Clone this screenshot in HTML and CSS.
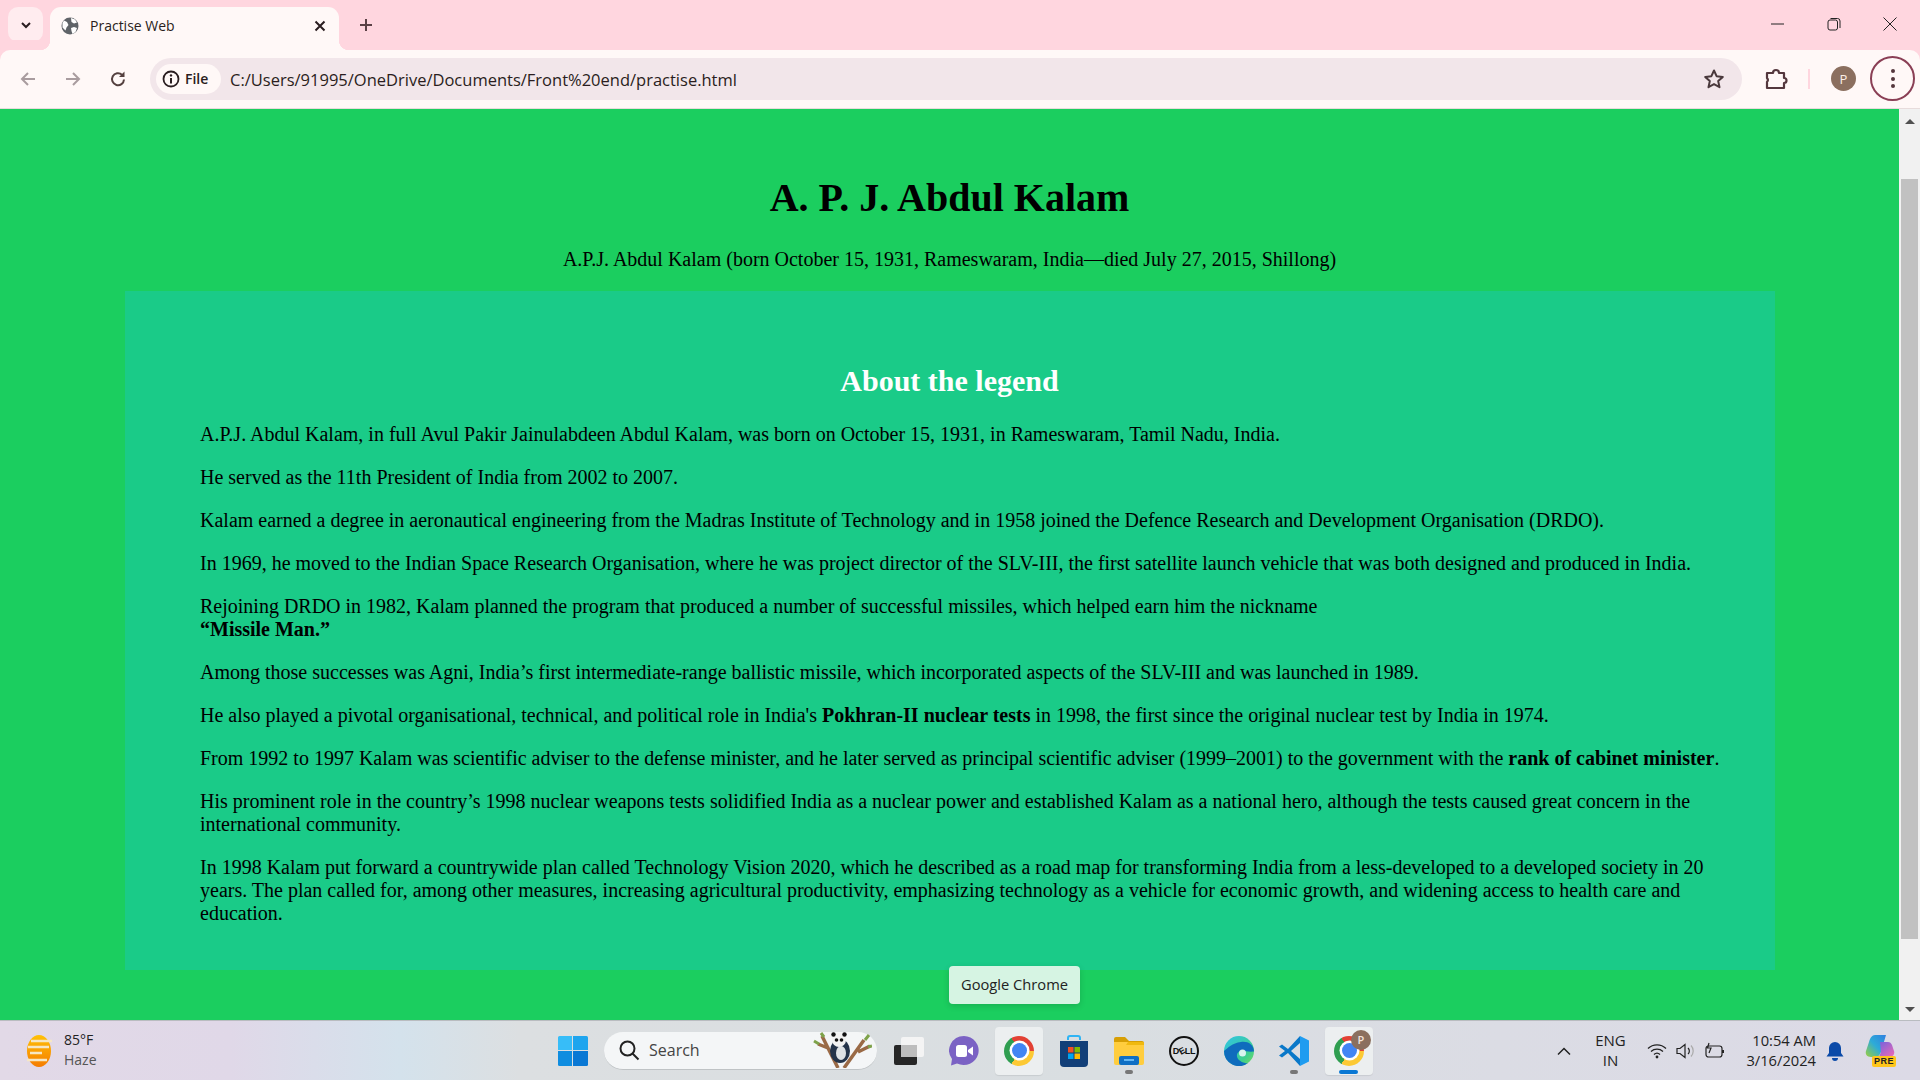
FILE: index.html
```html
<!DOCTYPE html>
<html lang="en">
<head>
<meta charset="utf-8">
<title>Practise Web</title>
<link rel="stylesheet" href="styles.css">
</head>
<body>
<div class="screen">
  <header class="tabbar">
    <button class="tabsearch"><svg width="14" height="14" viewBox="0 0 14 14"><path d="M3 5l4 4 4-4" fill="none" stroke="#2a1d20" stroke-width="2"/></svg></button>
    <div class="tab">
      <svg class="favicon" width="18" height="18" viewBox="0 0 18 18"><circle cx="9" cy="9" r="8.500" fill="#5f6368"/><path d="M3 3.500l3 1.500 1.500 3-2 2.500-1 3-3-3V6zM10 1l4 1.500 2 3-3 1-2.500-1.500zM10 11l3-1 3 1-1.500 4-3 2-1-3z" fill="#fff"/></svg>
      <span class="tabtitle">Practise Web</span>
      <svg class="tabclose" width="12" height="12" viewBox="0 0 12 12"><path d="M1.500 1.500l9 9M10.500 1.500l-9 9" stroke="#2a1d20" stroke-width="2"/></svg>
    </div>
    <svg class="newtab" width="14" height="14" viewBox="0 0 14 14"><path d="M7 1v12M1 7h12" stroke="#5b4146" stroke-width="2"/></svg>
    <div class="wincontrols">
      <svg width="14" height="14" viewBox="0 0 14 14"><path d="M0 7h13" stroke="#222" stroke-width="1"/></svg>
      <svg width="14" height="14" viewBox="0 0 14 14"><rect x="1" y="3" width="9.500" height="10" rx="2" fill="none" stroke="#222"/><path d="M3.500 1.500h7a2.500 2.500 0 0 1 2.500 2.500v7" fill="none" stroke="#222"/></svg>
      <svg width="14" height="14" viewBox="0 0 14 14"><path d="M.5.5l13 13M13.500.5l-13 13" stroke="#222" stroke-width="1"/></svg>
    </div>
  </header>

  <nav class="toolbar">
    <svg class="navicon" width="18" height="18" viewBox="0 0 18 18"><path d="M16 9H3M9 3L3 9l6 6" fill="none" stroke="#a99c9f" stroke-width="2"/></svg>
    <svg class="navicon" width="18" height="18" viewBox="0 0 18 18"><path d="M2 9h13M9 3l6 6-6 6" fill="none" stroke="#a99c9f" stroke-width="2"/></svg>
    <svg class="navicon" width="18" height="18" viewBox="0 0 18 18"><path d="M15 9.500A6 6 0 1 1 13 4.700" fill="none" stroke="#54403f" stroke-width="2"/><path d="M15.500 1.500v5.500H10z" fill="#54403f"/></svg>
    <div class="omnibox">
      <div class="chip">
        <svg width="18" height="18" viewBox="0 0 18 18"><circle cx="9" cy="9" r="7.500" fill="none" stroke="#2a1d20" stroke-width="1.800"/><path d="M9 8v5.500" stroke="#2a1d20" stroke-width="2"/><circle cx="9" cy="5.400" r="1.200" fill="#2a1d20"/></svg>
        <span>File</span>
      </div>
      <span class="url">C:/Users/91995/OneDrive/Documents/Front%20end/practise.html</span>
      <svg class="star" width="22" height="22" viewBox="0 0 22 22"><path d="M11 2.500l2.600 5.700 6.200.7-4.600 4.200 1.300 6.100-5.500-3.100-5.500 3.100 1.300-6.100L2.200 8.900l6.200-.7z" fill="none" stroke="#4a393c" stroke-width="2" stroke-linejoin="round"/></svg>
    </div>
    <div class="toolicons">
      <svg width="24" height="24" viewBox="0 0 24 24"><path d="M3 6h6a3 3 0 0 1 6 0h5v5a2.500 2.500 0 0 1 0 5v5H3v-6a3 3 0 0 0 0-4z" fill="none" stroke="#54373d" stroke-width="2.200" stroke-linejoin="round"/></svg>
      <span class="divider"></span>
      <span class="avatar">P</span>
      <span class="menubtn"><i></i><i></i><i></i></span>
    </div>
  </nav>

  <div class="viewport">
    <main class="page">
      <h1>A. P. J. Abdul Kalam</h1>
      <p class="lead">A.P.J. Abdul Kalam (born October 15, 1931, Rameswaram, India—died July 27, 2015, Shillong)</p>
      <section class="panel">
        <h2>About the legend</h2>
        <p>A.P.J. Abdul Kalam, in full Avul Pakir Jainulabdeen Abdul Kalam, was born on October 15, 1931, in Rameswaram, Tamil Nadu, India.</p>
        <p>He served as the 11th President of India from 2002 to 2007.</p>
        <p>Kalam earned a degree in aeronautical engineering from the Madras Institute of Technology and in 1958 joined the Defence Research and Development Organisation (DRDO).</p>
        <p>In 1969, he moved to the Indian Space Research Organisation, where he was project director of the SLV-III, the first satellite launch vehicle that was both designed and produced in India.</p>
        <p>Rejoining DRDO in 1982, Kalam planned the program that produced a number of successful missiles, which helped earn him the nickname<br><b>“Missile Man.”</b></p>
        <p>Among those successes was Agni, India’s first intermediate-range ballistic missile, which incorporated aspects of the SLV-III and was launched in 1989.</p>
        <p>He also played a pivotal organisational, technical, and political role in India's <b>Pokhran-II nuclear tests</b> in 1998, the first since the original nuclear test by India in 1974.</p>
        <p>From 1992 to 1997 Kalam was scientific adviser to the defense minister, and he later served as principal scientific adviser (1999–2001) to the government with the <b>rank of cabinet minister</b>.</p>
        <p>His prominent role in the country’s 1998 nuclear weapons tests solidified India as a nuclear power and established Kalam as a national hero, although the tests caused great concern in the international community.</p>
        <p>In 1998 Kalam put forward a countrywide plan called Technology Vision 2020, which he described as a road map for transforming India from a less-developed to a developed society in 20 years. The plan called for, among other measures, increasing agricultural productivity, emphasizing technology as a vehicle for economic growth, and widening access to health care and education.</p>
      </section>
    </main>
    <aside class="scrollbar">
      <span class="arrow up"></span>
      <span class="thumb"></span>
      <span class="arrow down"></span>
    </aside>
    <div class="tooltip">Google Chrome</div>
  </div>

  <footer class="taskbar">
    <div class="weather">
      <svg width="28" height="34" viewBox="0 0 28 34"><defs><linearGradient id="sun" x1="0" y1="0" x2="0" y2="1"><stop offset="0" stop-color="#ffc107"/><stop offset="1" stop-color="#f57c00"/></linearGradient></defs><ellipse cx="14" cy="17" rx="12" ry="16" fill="url(#sun)"/><path d="M6 7h21M3 13h16M12 13h12M5 19h12M2 26h20" stroke="#f6e7c4" stroke-width="2.500"/></svg>
      <div class="weathertext"><span>85°F</span><span class="haze">Haze</span></div>
    </div>
    <div class="centerbar">
      <svg class="winlogo" width="30" height="30" viewBox="0 0 30 30"><path d="M0 1.500A1.500 1.500 0 0 1 1.500 0H14v14H0z" fill="#37bdf8"/><path d="M15 0h13.500A1.500 1.500 0 0 1 30 1.500V14H15z" fill="#1ea5ee"/><path d="M0 15h14v15H1.500A1.500 1.500 0 0 1 0 28.500z" fill="#0f8de0"/><path d="M15 15h15v13.500a1.500 1.500 0 0 1-1.500 1.500H15z" fill="#0a78d4"/></svg>
      <div class="search">
        <svg width="22" height="22" viewBox="0 0 22 22"><circle cx="9.500" cy="9.500" r="7" fill="none" stroke="#222" stroke-width="2"/><path d="M14.500 14.500l6 6" stroke="#222" stroke-width="2"/></svg>
        <span class="searchlabel">Search</span>
        <svg class="panda" width="60" height="36" viewBox="0 0 60 36"><path d="M10 4l16 32M52 8L32 36M46 20l12-6M16 16L6 12" stroke="#9a6a46" stroke-width="3.500" fill="none"/><path d="M53 8l4-5M56 15l4-1M7 12L2 9M12 5L9 1" stroke="#7ea24a" stroke-width="3"/><ellipse cx="28" cy="19" rx="10" ry="12" fill="#24344a"/><ellipse cx="29" cy="21" rx="5" ry="7" fill="#dfe3e6"/><circle cx="27" cy="8" r="7" fill="#f2f2f2"/><circle cx="24.500" cy="8" r="1.800" fill="#111"/><circle cx="29.500" cy="8" r="1.800" fill="#111"/><circle cx="21.500" cy="2.500" r="2.200" fill="#111"/><circle cx="32.500" cy="2.500" r="2.200" fill="#111"/></svg>
      </div>
      <div class="apps">
        <span class="app"><svg width="32" height="30" viewBox="0 0 32 30"><rect x="8" y="1" width="23" height="20" rx="2" fill="#f4f4f4"/><rect x="1" y="9" width="23" height="20" rx="2" fill="#262626"/><rect x="8" y="9" width="16" height="12" fill="#bdbdbd"/></svg></span>
        <span class="app"><svg width="30" height="30" viewBox="0 0 30 30"><path d="M15 0a15 14.500 0 1 1-7 27.500L2 29.500l1-6.500A15 14.500 0 0 1 15 0z" fill="#7b62c4"/><rect x="7" y="9" width="11" height="12" rx="2.500" fill="#fff"/><path d="M19 14l5-3.500v9L19 16z" fill="#fff"/></svg></span>
        <span class="app hover"><span class="chrome"></span></span>
        <span class="app"><svg width="30" height="32" viewBox="0 0 30 32"><path d="M9 5V3a2 2 0 0 1 2-2h8a2 2 0 0 1 2 2v2" fill="none" stroke="#2fb4f4" stroke-width="2"/><path d="M1 6h28v22a4 4 0 0 1-4 4H5a4 4 0 0 1-4-4z" fill="#123f78"/><rect x="9" y="12" width="5.500" height="5.500" fill="#f25022"/><rect x="15.500" y="12" width="5.500" height="5.500" fill="#7fba00"/><rect x="9" y="18.500" width="5.500" height="5.500" fill="#00a4ef"/><rect x="15.500" y="18.500" width="5.500" height="5.500" fill="#ffb900"/></svg></span>
        <span class="app dot"><svg width="30" height="28" viewBox="0 0 30 28"><path d="M0 2a2 2 0 0 1 2-2h9l4 4h13a2 2 0 0 1 2 2v4H0z" fill="#d79f05"/><path d="M0 5h30v21a2 2 0 0 1-2 2H2a2 2 0 0 1-2-2z" fill="#ffcd3e"/><path d="M14 5h16v3H12z" fill="#f0b90f"/><rect x="5" y="19" width="20" height="9" rx="2" fill="#0f6fc4"/><rect x="10" y="22" width="10" height="2" fill="#63b6f3"/></svg></span>
        <span class="app"><span class="dell"><span>D<i>E</i>LL</span></span></span>
        <span class="app"><svg width="30" height="30" viewBox="0 0 30 30"><defs><linearGradient id="edge" x1="0" y1="0" x2="1" y2="1"><stop offset="0" stop-color="#2fc3e8"/><stop offset=".7" stop-color="#3ecf8e"/><stop offset="1" stop-color="#7dd957"/></linearGradient></defs><circle cx="15" cy="15" r="15" fill="url(#edge)"/><path d="M0 15a15 15 0 0 0 24 12 10 10 0 0 1-9-3c-4-4-2-9 3-9 3 0 7 1 12 .5C30 8 23 5 17 6 8 7 4 12 0 15z" fill="#0f6cbd"/><circle cx="18.500" cy="17" r="3.500" fill="#d8f3ee"/></svg></span>
        <span class="app dot"><svg width="30" height="30" viewBox="0 0 30 30"><path d="M21 0l9 4.500v21L21 30V0z" fill="#1f9cf0"/><path d="M21 0L9 13 3 8.500 0 10.500 6 15l-6 4.500 3 2L9 17l12 13v-7L12 15l9-8z" fill="#0a78c9"/></svg></span>
        <span class="app active"><span class="chrome"></span><span class="badge">P</span></span>
      </div>
    </div>
    <div class="tray">
      <svg width="16" height="10" viewBox="0 0 16 10"><path d="M2 8.500l6-6 6 6" fill="none" stroke="#222" stroke-width="1.500"/></svg>
      <div class="lang"><span>ENG</span><span>IN</span></div>
      <div class="sysicons">
        <svg width="20" height="16" viewBox="0 0 20 16"><path d="M1 5.500a13 13 0 0 1 18 0M4 8.500a9 9 0 0 1 12 0M7 11.500a4.500 4.500 0 0 1 6 0" fill="none" stroke="#222" stroke-width="1.300"/><circle cx="10" cy="14" r="1.400" fill="#222"/></svg>
        <svg width="20" height="18" viewBox="0 0 20 18"><path d="M1 6.500h3l5-4v13l-5-4H1z" fill="none" stroke="#222" stroke-width="1.200"/><path d="M12 6a4 4 0 0 1 0 6" fill="none" stroke="#222" stroke-width="1.200"/><path d="M15 3.500a8 8 0 0 1 0 11" fill="none" stroke="#aaa" stroke-width="1.200"/></svg>
        <svg width="20" height="18" viewBox="0 0 20 18"><rect x="1" y="4" width="16" height="11" rx="2.500" fill="none" stroke="#222" stroke-width="1.200"/><path d="M18 8v3" stroke="#222" stroke-width="2"/><path d="M4 1L2.500 6H6l-2 5" fill="none" stroke="#222" stroke-width="1.200"/></svg>
      </div>
      <div class="clock"><span>10:54 AM</span><span>3/16/2024</span></div>
      <svg class="bell" width="18" height="20" viewBox="0 0 18 20"><path d="M9 1a6 6 0 0 1 6 6v5l2.500 3.500H.5L3 12V7a6 6 0 0 1 6-6z" fill="#0b4aa8"/><path d="M6 17h6a3 3 0 0 1-6 0z" fill="#0b4aa8"/></svg>
      <div class="copilot">
        <svg width="30" height="24" viewBox="0 0 30 24"><defs><linearGradient id="copa" x1="0" y1="1" x2="1" y2="0"><stop offset="0" stop-color="#9ccf3c"/><stop offset=".5" stop-color="#2dabd8"/><stop offset="1" stop-color="#2f7fe0"/></linearGradient><linearGradient id="copb" x1="0" y1="0" x2="1" y2="1"><stop offset="0" stop-color="#6a63e0"/><stop offset="1" stop-color="#f06bb5"/></linearGradient></defs><path d="M10 0h11l-5 17c-1 3-3 5-6 5H6c-4 0-6-3-5-6l3-9c1-4 3-7 6-7z" fill="url(#copa)"/><path d="M15 7h8c2 0 3 1 4 3l2 6c1 3-1 6-5 6H11c3 0 4-2 5-5z" fill="url(#copb)"/></svg>
        <span class="pre">PRE</span>
      </div>
    </div>
  </footer>
</div>
</body>
</html>
```
FILE: styles.css
```css
* { box-sizing: border-box; }
html, body { margin: 0; height: 100%; overflow: hidden; }
.screen {
  width: 1920px; height: 1080px;
  display: flex; flex-direction: column;
  font-family: "Open Sans", "Noto Sans", sans-serif;
  color: #222;
}

/* tab strip */
.tabbar {
  height: 50px; background: #ffd6df;
  display: flex; align-items: flex-end;
  padding-left: 8px;
}
.tabsearch {
  width: 35px; height: 35px; margin-bottom: 8px;
  border: 0; border-radius: 10px; background: #ffecef;
  display: flex; align-items: center; justify-content: center; padding: 0;
}
.tab {
  position: relative;
  width: 289px; height: 43px; margin-left: 7px;
  background: #fff8f7; border-radius: 11px 11px 0 0;
  display: flex; align-items: center;
  padding: 0 13px 5px 11px;
}
.tab::before, .tab::after {
  content: ""; position: absolute; bottom: 0; width: 10px; height: 10px;
}
.tab::before { left: -10px; background: radial-gradient(circle at 0 0, transparent 10px, #fff8f7 10.5px); }
.tab::after { right: -10px; background: radial-gradient(circle at 100% 0, transparent 10px, #fff8f7 10.5px); }
.favicon { flex: none; }
.tabtitle { margin-left: 11px; flex: 1; font-size: 14px; color: #2a1d20; white-space: nowrap; padding-bottom: 2px; }
.newtab { margin: 0 0 18px 20px; }
.wincontrols {
  margin-left: auto; margin-bottom: 19px; padding-right: 23px;
  display: flex; gap: 42px;
}

/* toolbar */
.toolbar {
  height: 59px; background: #fff8f7;
  border-radius: 10px 10px 0 0;
  border-bottom: 1px solid #e8dcdc;
  display: flex; align-items: center;
  padding: 0 5px 1px 19px; gap: 27px;
  box-shadow: 0 -10px 0 #ffd6df;
}
.navicon { flex: none; }
.omnibox {
  margin-left: -4px;
  width: 1595px; height: 42px; border-radius: 21px;
  background: #f2e6ea;
  display: flex; align-items: center;
  padding: 0 17px 0 6px;
}
.chip {
  height: 30px; width: 65px; border-radius: 15px; background: #fff8f7;
  display: flex; align-items: center; gap: 5px; padding-left: 6px;
  font-size: 14px; color: #2a1d20; font-weight: 600;
}
.url { margin-left: 9px; font-size: 16.500px; color: #2a1d20; flex: 1; white-space: nowrap; padding-top: 1px; }
.toolicons { display: flex; align-items: center; margin-left: -5px; }
.divider { width: 2px; height: 20px; background: #ffd6df; margin: 0 21px 0 20px; }
.avatar {
  width: 25px; height: 25px; border-radius: 50%;
  background: #8b6f5f; color: #fbeee8;
  font-size: 13px; display: flex; align-items: center; justify-content: center;
}
.menubtn {
  width: 45px; height: 45px; margin-left: 14px;
  border: 2px solid #8a3f55; border-radius: 50%;
  display: flex; flex-direction: column; align-items: center; justify-content: center; gap: 3.500px;
}
.menubtn i { width: 4px; height: 4px; border-radius: 50%; background: #54373d; }

/* page */
.viewport { position: relative; flex: 1; display: flex; min-height: 0; }
.page {
  flex: 1; min-width: 0; overflow: hidden;
  background: #1bce5f;
  font-family: "Liberation Serif", "Times New Roman", serif;
  font-size: 20px; color: #000;
  padding-top: 66px;
}
h1 { margin: 0; font-size: 40px; line-height: 46px; text-align: center; }
.lead { margin: 27px 0 20px; text-align: center; line-height: 23px; }
.panel {
  margin: 0 124px 0 125px; height: 679px;
  background: #1acb88;
  padding: 73px 40px 0 75px;
}
h2 { margin: 0 36px 25px 0; font-size: 30px; line-height: 34px; text-align: center; color: #fff; }
.panel p { margin: 0 0 20px; line-height: 23px; }

/* scrollbar */
.scrollbar {
  width: 21px; background: #f1f1f1;
  display: flex; flex-direction: column; align-items: center;
}
.arrow { width: 0; height: 0; border-left: 5px solid transparent; border-right: 5px solid transparent; flex: none; }
.arrow.up { border-bottom: 5px solid #505050; margin-top: 10px; }
.arrow.down { border-top: 5px solid #505050; margin-top: 68px; }
.thumb { width: 17px; height: 760px; background: #c1c1c1; margin-top: 55px; flex: none; }
.tooltip {
  position: absolute; left: 949px; top: 857px;
  width: 131px; height: 38px; border-radius: 4px;
  background: #d6f4e3; color: #222;
  font-size: 14.700px; padding-bottom: 2px;
  display: flex; align-items: center; justify-content: center;
  box-shadow: 0 2px 6px rgba(0,0,0,.15);
}

/* taskbar */
.taskbar {
  height: 60px; flex: none;
  border-top: 1px solid #b9bcc0;
  background: linear-gradient(90deg, #e2d9e7 0, #e0d8e8 230px, #d4e2ec 400px, #dcdfe1 520px, #d9dee1 1100px, #dbdce4 1500px, #dcdae6 1920px);
  display: grid; grid-template-columns: 558px 1fr auto;
  align-items: center;
}
.weather { display: flex; align-items: center; gap: 11px; padding-left: 25px; }
.weathertext { display: flex; flex-direction: column; font-size: 14px; line-height: 20px; color: #222; padding-bottom: 2px; }
.haze { color: #555; }
.centerbar { display: flex; align-items: center; }
.winlogo { flex: none; }
.search {
  width: 273px; height: 38px; margin-left: 16px;
  border-radius: 19px; background: #f4f6f7;
  border-bottom: 1px solid #bfc3c5;
  display: flex; align-items: center; padding: 0 5px 0 14px;
}
.searchlabel { margin-left: 9px; font-size: 16px; color: #444; flex: 1; padding-bottom: 1px; }
.apps { display: flex; align-items: center; margin-left: 8px; }
.app {
  position: relative;
  width: 48px; height: 48px; margin-right: 7px; border-radius: 4px;
  display: flex; align-items: center; justify-content: center; flex: none;
}
.app.hover, .app.active { background: #eceff0; box-shadow: 0 1px 1px rgba(0,0,0,.08); }
.app.dot::after, .app.active::after {
  content: ""; position: absolute; left: 20px; bottom: 1px;
  width: 8px; height: 4px; border-radius: 2px; background: #777;
}
.app.active::after { left: 14px; width: 19px; background: #0a78d4; }
.chrome {
  position: relative; display: block; width: 30px; height: 30px; border-radius: 50%;
  background: conic-gradient(from -30deg, #e24134 0 120deg, #fcc934 120deg 240deg, #2f9e50 240deg 360deg);
}
.chrome::after {
  content: ""; position: absolute; inset: 7.500px; border-radius: 50%;
  background: #4285f4; box-shadow: 0 0 0 2.500px #fff;
}
.badge {
  position: absolute; top: 3px; right: 2px;
  width: 20px; height: 20px; border-radius: 50%;
  background: #8b6f5f; color: #f3e2da; font-size: 11px; font-weight: 600;
  display: flex; align-items: center; justify-content: center;
}
.dell {
  width: 30px; height: 30px; border-radius: 50%; border: 2px solid #111;
  display: flex; align-items: center; justify-content: center;
  font: 700 9px "Liberation Sans", sans-serif; color: #111; letter-spacing: -.3px;
}
.dell i { font-style: normal; display: inline-block; transform: rotate(-30deg); }
.tray { display: flex; align-items: center; padding-right: 25px; }
.tray > svg:first-child { margin-right: -2px; }
.lang { display: flex; flex-direction: column; align-items: center; margin-left: 20px; font-size: 15px; line-height: 20px; width: 40px; padding-bottom: 2px; }
.sysicons { display: flex; align-items: center; gap: 9px; margin-left: 17px; }
.clock { display: flex; flex-direction: column; align-items: flex-end; margin-left: 21px; font-size: 14.700px; line-height: 20px; white-space: nowrap; padding-bottom: 2px; }
.bell { margin-left: 10px; }
.copilot { position: relative; margin-left: 21px; width: 30px; height: 32px; }
.pre {
  position: absolute; left: 7px; bottom: 0; height: 11px; padding: 0 2px;
  background: #ffc61a; border-radius: 2px; color: #222;
  font: 700 9px/11px "Liberation Sans", sans-serif; letter-spacing: .5px;
}
```
